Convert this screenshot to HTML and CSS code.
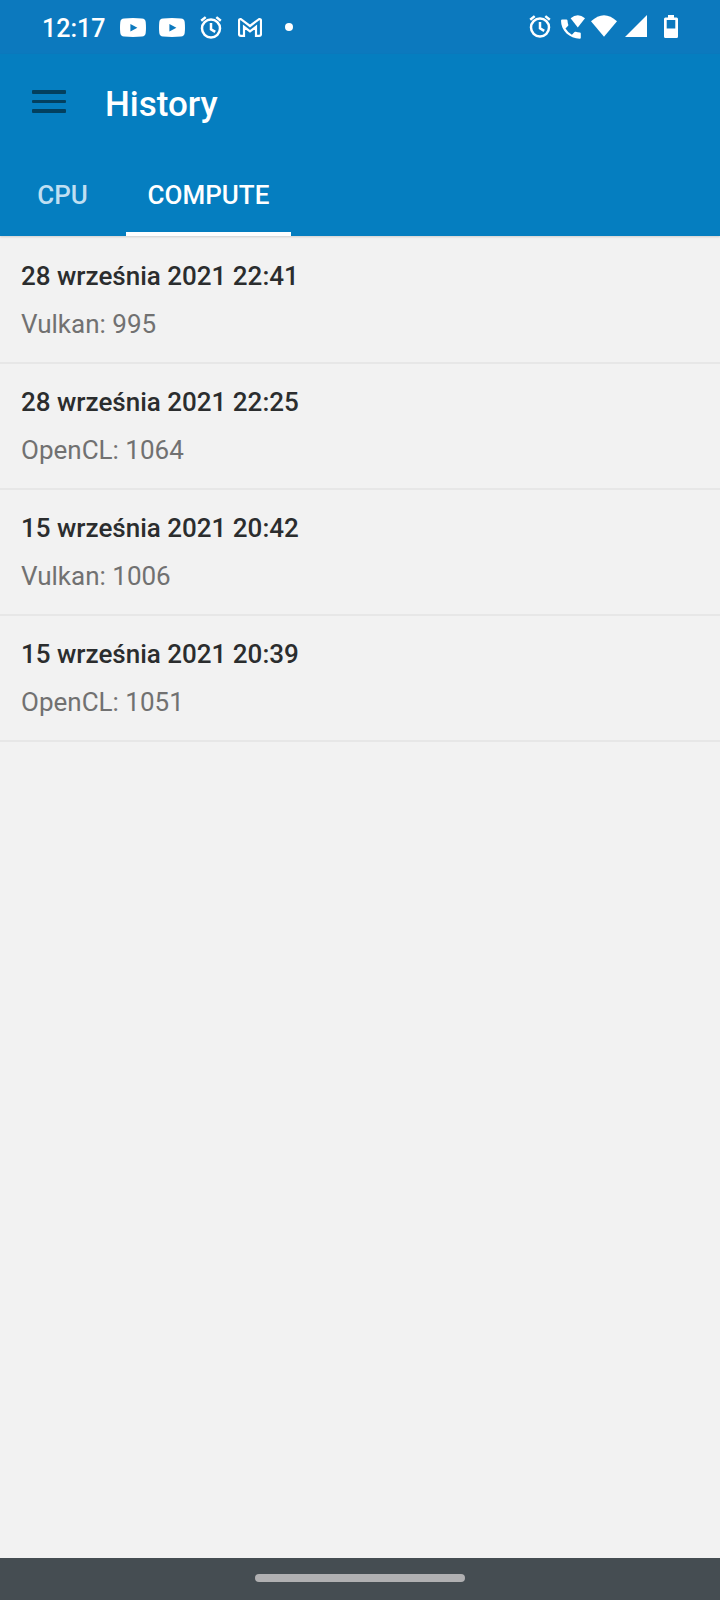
FILE: index.html
```html
<!DOCTYPE html>
<html lang="pl">
<head>
    <meta charset="UTF-8">
    <meta name="viewport" content="width=device-width, initial-scale=1.0">
    <title>History</title>
    <link rel="stylesheet" href="styles.css">
</head>
<body>
    <div class="status-bar">
        <div class="status-left">
            <span class="clock">12:17</span>
            <svg class="icon-youtube" width="26" height="20" viewBox="0 0 26 20">
                <path fill-rule="evenodd" d="M4 .6Q13-.4 22 .6Q25.400 1 25.700 4Q26.300 10 25.700 15Q25.300 18.200 22 18.500Q13 19.400 4 18.500Q.7 18.200.3 15Q-.3 10 .3 4Q.6 1 4 .6zM10.400 6v7.400l7-3.700z"/>
            </svg>
            <svg class="icon-youtube" width="26" height="20" viewBox="0 0 26 20">
                <path fill-rule="evenodd" d="M4 .6Q13-.4 22 .6Q25.400 1 25.700 4Q26.300 10 25.700 15Q25.300 18.200 22 18.500Q13 19.400 4 18.500Q.7 18.200.3 15Q-.3 10 .3 4Q.6 1 4 .6zM10.400 6v7.400l7-3.700z"/>
            </svg>
            <svg class="icon-alarm" width="22" height="23" viewBox="0 0 22 23">
                <circle cx="11" cy="12.600" r="9"/>
                <path d="M11 7v6.200l4.200 2.700M1.200 4.800l4.500-3.700M20.800 4.800l-4.500-3.700"/>
            </svg>
            <svg class="icon-gmail" width="24" height="19" viewBox="0 0 24 19">
                <path d="M1 16V2.800Q1 .8 3 1.200L12 8l9-6.800Q23 .8 23 2.800V16Q23 17.800 21.200 17.800H18V8.800L12 13.400 6 8.800v9H2.800Q1 17.800 1 16z"/>
            </svg>
            <span class="more-dot"></span>
        </div>
        <div class="status-right">
            <svg class="icon-alarm" width="22" height="23" viewBox="0 0 22 23">
                <circle cx="11" cy="12.600" r="9"/>
                <path d="M11 7v6.200l4.200 2.700M1.200 4.800l4.500-3.700M20.800 4.800l-4.500-3.700"/>
            </svg>
            <svg class="icon-call" width="24" height="25" viewBox="0 0 24 25">
                <path d="M1.200 4.600h4.200q1 0 1.100 1 .1 2.200.8 4.100.2.800-.4 1.400L4.500 13.500q2.500 4.200 6.400 6.200l2.600-2.600q.5-.5 1.300-.3 1.800.6 4 .7 1 0 1 1v4.200q0 1-1 1C8.600 23.700 0 15.400 0 5.700q0-1.100 1.200-1.100z"/>
                <path d="M16.800 12.600L9.600 3.200Q16.800-2.600 24 3.200z"/>
            </svg>
            <svg class="icon-wifi" width="26" height="22" viewBox="0 0 26 22">
                <path d="M13 21.800L0 6.300Q13-6 26 6.300z"/>
            </svg>
            <svg class="icon-signal" width="22" height="22" viewBox="0 0 22 22">
                <path d="M0 22L22 0v22z"/>
            </svg>
            <svg class="icon-battery" width="14" height="23" viewBox="0 0 14 23">
                <path fill-rule="evenodd" d="M4 0h6v2.500h2.600Q14 2.500 14 4v17.500Q14 23 12.600 23H1.400Q0 23 0 21.500V4Q0 2.500 1.400 2.500H4zM2.700 5v8.500h8.600V5z"/>
            </svg>
        </div>
    </div>

    <header class="header">
        <div class="toolbar">
            <button class="menu-button" aria-label="Menu">
                <span></span>
                <span></span>
                <span></span>
            </button>
            <h1 class="title">History</h1>
        </div>
        <nav class="tabs">
            <div class="tab">CPU</div>
            <div class="tab active">COMPUTE</div>
        </nav>
    </header>

    <main class="history">
        <div class="entry">
            <div class="entry-date">28 września 2021 22:41</div>
            <div class="entry-score">Vulkan: 995</div>
        </div>
        <div class="entry">
            <div class="entry-date">28 września 2021 22:25</div>
            <div class="entry-score">OpenCL: 1064</div>
        </div>
        <div class="entry">
            <div class="entry-date">15 września 2021 20:42</div>
            <div class="entry-score">Vulkan: 1006</div>
        </div>
        <div class="entry">
            <div class="entry-date">15 września 2021 20:39</div>
            <div class="entry-score">OpenCL: 1051</div>
        </div>
    </main>

    <div class="nav-bar">
        <div class="nav-handle"></div>
    </div>
</body>
</html>
```
FILE: styles.css
```css
*, *::before, *::after {
	box-sizing: border-box;
}

body {
	margin: 0;
	height: 1600px;
	display: flex;
	flex-direction: column;
	background-color: #f2f2f2;
	font-family: Roboto, sans-serif;
	font-size: 26px;
	overflow: hidden;
}

svg {
	display: block;
	flex: none;
	fill: white;
}

.status-bar {
	height: 54px;
	display: flex;
	justify-content: space-between;
	background-color: #0c79be;
	color: white;
}

.status-left,
.status-right {
	display: flex;
	align-items: flex-start;
}

.status-left {
	padding: 18px 0 0 42px;
}

.status-right {
	padding: 15px 42px 0 0;
}

.clock {
	width: 78px;
	font-size: 25px;
	line-height: 21px;
	font-weight: 500;
}

.icon-youtube {
	margin-right: 13px;
}

.icon-alarm {
	fill: none;
	stroke: white;
	stroke-width: 2.5;
}

.status-left .icon-alarm {
	margin: -2px 16px 0 2px;
}

.icon-gmail {
	fill: none;
	stroke: white;
	stroke-width: 2.2;
}

.more-dot {
	width: 8px;
	height: 8px;
	margin: 5px 0 0 23px;
	border-radius: 50%;
	background-color: white;
}

.icon-call {
	margin: 0 6px 0 10px;
}

.icon-signal {
	margin: 0 17px 0 8px;
}

.header {
	height: 182px;
	display: flex;
	flex-direction: column;
	background-color: #057ec0;
	color: white;
	box-shadow: 0 1px 2px rgba(0, 0, 0, 0.15);
}

.toolbar {
	flex: 1;
	display: flex;
	align-items: flex-start;
	padding: 36px 32px 0;
}

.menu-button {
	width: 34px;
	display: flex;
	flex-direction: column;
	gap: 6px;
	padding: 0;
	border: none;
	background: none;
	cursor: pointer;
}

.menu-button span {
	width: 34px;
	height: 3.500px;
	border-radius: 1px;
	background-color: #03405f;
}

.title {
	margin: -7px 0 0 39px;
	font-size: 35px;
	line-height: 44px;
	font-weight: 500;
}

.tabs {
	height: 71px;
	display: flex;
}

.tab {
	width: 126px;
	padding-right: 1px;
	border-bottom: 4px solid transparent;
	line-height: 60px;
	font-weight: 500;
	text-align: center;
	color: #bfdff2;
	cursor: pointer;
}

.tab.active {
	width: 165px;
	padding: 0;
	color: white;
	border-bottom-color: white;
}

.history {
	flex: 1;
	padding-top: 2px;
}

.entry {
	height: 126px;
	padding: 14px 21px;
	border-bottom: 2px solid #e7e7e7;
	line-height: 48px;
}

.entry-date {
	font-weight: 500;
	color: #2b2d2e;
}

.entry-score {
	color: #717171;
}

.nav-bar {
	height: 42px;
	display: flex;
	justify-content: center;
	align-items: center;
	padding-bottom: 2px;
	background-color: #454d52;
}

.nav-handle {
	width: 210px;
	height: 8px;
	border-radius: 4px;
	background-color: #b0b0b2;
}
```
